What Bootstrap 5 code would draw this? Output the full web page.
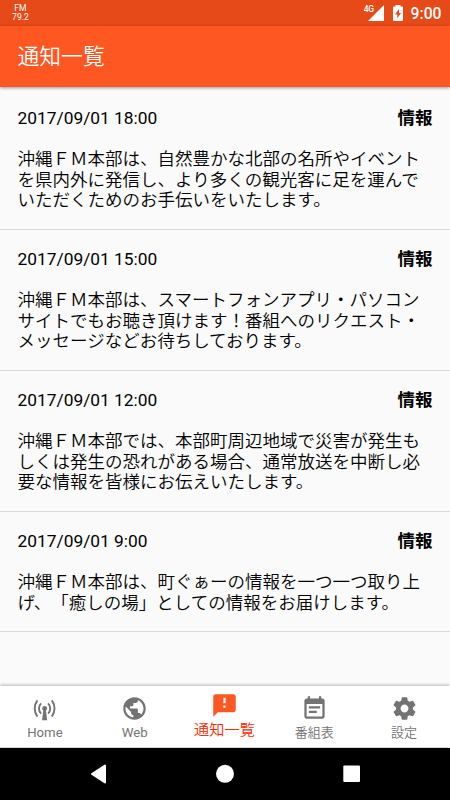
<!DOCTYPE html>
<html lang="ja">
<head>
<meta charset="utf-8">
<meta name="viewport" content="width=device-width, initial-scale=1">
<title>通知一覧</title>
<link href="https://cdn.jsdelivr.net/npm/bootstrap@5.3.0/dist/css/bootstrap.min.css" rel="stylesheet">
<style>
body{font-family:Roboto,"Noto Sans CJK JP",sans-serif;background:#fafafa;color:#000;font-size:17.5px;text-spacing-trim:space-all}
.screen{height:800px;width:450px}
.status-bar{height:26px;background:#e64a19;padding:0 8.5px 0 12px;font-size:15.7px;line-height:26px}
.fm-logo{font:8.6px/9px Roboto,sans-serif;width:17px}
.net-label{font-size:8.5px;line-height:8px;font-weight:500;margin:5px -7px 0 0;letter-spacing:-.4px}
.battery{margin:0 7px 0 8px}
.clock{margin-top:2px}
.app-bar{height:61px;background:#ff5722;box-shadow:0 1px 3px rgba(0,0,0,.4);padding:2px 17.5px 0;font-size:21.8px;z-index:1;font-weight:350}
.notices{padding-top:2px}
.notice{border-bottom:1px solid #d8d8d8;padding:17.3px 17.5px 18.2px}
.notice-head{height:24px;line-height:24px;margin-bottom:19px}
.notice-head time{font-size:17.35px}
.notice-text{line-height:20.5px;font-weight:350}
.tabs{height:62px;width:449px;background:#fff;border-bottom:1px solid #d5d5d5}
.tab-wrap{background:#fff;box-shadow:0 -1px 3px rgba(0,0,0,.28)}
.tab{color:#737373;font-size:13px;line-height:18px;padding-top:8.5px}
.tab svg{width:27px;height:27px;fill:currentColor;margin-bottom:2px}
.tab span{font-weight:350}
.tab.tab-latin span{font-size:13.2px;font-weight:400}
.tab.current{color:#ff5722;padding-top:6px;font-size:15.2px}
.tab.current span{color:#ff2a00;margin-top:-.5px}
.system-bar{height:52px;background:#000}
</style>
<script src="https://cdn.jsdelivr.net/npm/bootstrap@5.3.0/dist/js/bootstrap.bundle.min.js"></script>
</head>
<body>
<div class="screen d-flex flex-column overflow-hidden">
  <div class="status-bar d-flex align-items-center text-white flex-shrink-0">
    <div class="fm-logo text-center me-auto">FM<br>79.2</div>
    <span class="net-label align-self-start">4G</span>
    <svg width="17" height="16" viewBox="0 0 17 16" fill="#fff"><path d="M17 0v16H1z"/></svg>
    <svg class="battery" width="12" height="18" viewBox="0 0 12 18"><path fill="#fff" d="M3.5 1h5v1.500H10q1 0 1 1V16q0 1-1 1H2q-1 0-1-1V3.500q0-1 1-1h1.500z"/><path fill="#e64a19" d="M7 5 3 10.500h2.300v4L9 9H7z"/></svg>
    <span class="clock fw-medium">9:00</span>
  </div>
  <header class="app-bar d-flex align-items-center text-white position-relative flex-shrink-0">通知一覧</header>
  <main class="notices flex-grow-1">
    <article class="notice">
      <div class="notice-head d-flex justify-content-between"><time>2017/09/01 18:00</time><b>情報</b></div>
      <div class="notice-text text-nowrap">沖縄ＦＭ本部は、自然豊かな北部の名所やイベント<br>を県内外に発信し、より多くの観光客に足を運んで<br>いただくためのお手伝いをいたします。</div>
    </article>
    <article class="notice">
      <div class="notice-head d-flex justify-content-between"><time>2017/09/01 15:00</time><b>情報</b></div>
      <div class="notice-text text-nowrap">沖縄ＦＭ本部は、スマートフォンアプリ・パソコン<br>サイトでもお聴き頂けます！番組へのリクエスト・<br>メッセージなどお待ちしております。</div>
    </article>
    <article class="notice">
      <div class="notice-head d-flex justify-content-between"><time>2017/09/01 12:00</time><b>情報</b></div>
      <div class="notice-text text-nowrap">沖縄ＦＭ本部では、本部町周辺地域で災害が発生も<br>しくは発生の恐れがある場合、通常放送を中断し必<br>要な情報を皆様にお伝えいたします。</div>
    </article>
    <article class="notice">
      <div class="notice-head d-flex justify-content-between"><time>2017/09/01 9:00</time><b>情報</b></div>
      <div class="notice-text text-nowrap">沖縄ＦＭ本部は、町ぐぁーの情報を一つ一つ取り上<br>げ、「癒しの場」としての情報をお届けします。</div>
    </article>
  </main>
  <div class="tab-wrap flex-shrink-0">
  <nav class="tabs row g-0">
    <div class="tab tab-latin col d-flex flex-column align-items-center"><svg viewBox="0 0 24 24"><path d="M11.200 12h1.800l1.400 10.500H9.800z"/><circle cx="12.100" cy="12" r="2.200"/><path fill="none" stroke="currentColor" stroke-width="1.700" d="M9 7.500a6.300 6.300 0 0 0 0 9M15.200 7.500a6.300 6.300 0 0 1 0 9M5.700 4.800a12 12 0 0 0 0 14.400M18.500 4.800a12 12 0 0 1 0 14.400"/></svg><span>Home</span></div>
    <div class="tab tab-latin col d-flex flex-column align-items-center"><svg viewBox="0 0 24 24"><path d="M12 2C6.480 2 2 6.480 2 12s4.480 10 10 10 10-4.480 10-10S17.520 2 12 2zm-1 17.930c-3.950-.49-7-3.850-7-7.930 0-.62.08-1.210.21-1.790L9 15v1c0 1.100.9 2 2 2v1.930zm6.900-2.540c-.26-.81-1-1.390-1.900-1.390h-1v-3c0-.55-.45-1-1-1H8v-2h2c.55 0 1-.45 1-1V7h2c1.100 0 2-.9 2-2v-.41c2.930 1.190 5 4.060 5 7.410 0 2.080-.8 3.970-2.100 5.390z"/></svg><span>Web</span></div>
    <div class="tab current col d-flex flex-column align-items-center"><svg viewBox="0 0 24 24"><path d="M20 2H4c-1.100 0-1.990.9-1.990 2L2 22l4-4h14c1.100 0 2-.9 2-2V4c0-1.100-.9-2-2-2zm-7 12h-2v-2h2v2zm0-4h-2V5h2v5z"/></svg><span>通知一覧</span></div>
    <div class="tab col d-flex flex-column align-items-center"><svg viewBox="0 0 24 24"><path d="M17 10H7v2h10v-2zm2-7h-1V1h-2v2H8V1H6v2H5c-1.110 0-1.990.9-1.990 2L3 19c0 1.100.89 2 2 2h14c1.100 0 2-.9 2-2V5c0-1.100-.9-2-2-2zm0 16H5V8h14v11zm-5-5H7v2h7v-2z"/></svg><span>番組表</span></div>
    <div class="tab col d-flex flex-column align-items-center"><svg viewBox="0 0 24 24"><path d="M19.430 12.980c.04-.32.07-.64.07-.98s-.03-.66-.07-.98l2.110-1.650c.19-.15.24-.42.12-.64l-2-3.460c-.12-.22-.39-.3-.61-.22l-2.490 1c-.52-.4-1.080-.73-1.690-.98l-.38-2.650C14.460 2.180 14.250 2 14 2h-4c-.25 0-.46.18-.49.42l-.38 2.650c-.61.25-1.170.59-1.690.98l-2.490-1c-.23-.09-.49 0-.61.22l-2 3.460c-.13.22-.07.49.12.64l2.110 1.650c-.04.32-.07.65-.07.98s.03.66.07.98l-2.110 1.650c-.19.15-.24.42-.12.64l2 3.460c.12.22.39.3.61.22l2.490-1c.52.4 1.080.73 1.690.98l.38 2.650c.03.24.24.42.49.42h4c.25 0 .46-.18.49-.42l.38-2.650c.61-.25 1.170-.59 1.690-.98l2.490 1c.23.09.49 0 .61-.22l2-3.460c.12-.22.07-.49-.12-.64l-2.110-1.650zM12 15.500c-1.930 0-3.500-1.570-3.500-3.500s1.570-3.500 3.500-3.500 3.500 1.570 3.500 3.500-1.570 3.500-3.500 3.500z"/></svg><span>設定</span></div>
  </nav>
  </div>
  <div class="system-bar d-flex justify-content-center flex-shrink-0">
    <svg width="450" height="52" viewBox="0 0 450 52" fill="#fff"><path d="M105 17.500v17L92 26z" stroke="#fff" stroke-width="2" stroke-linejoin="round"/><circle cx="225" cy="25.800" r="9"/><rect x="343.300" y="17.500" width="16.700" height="16.500" rx="1"/></svg>
  </div>
</div>
</body>
</html>
